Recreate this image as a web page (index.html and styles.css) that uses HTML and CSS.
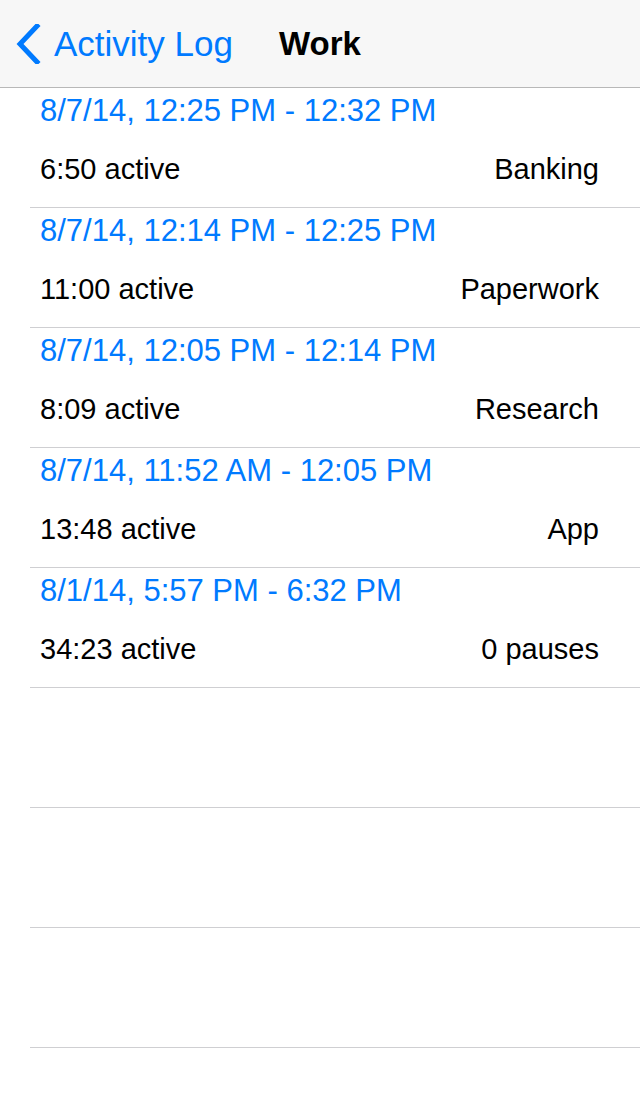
FILE: index.html
```html
<!DOCTYPE html>
<html>
<head>
<meta charset="utf-8">
<link rel="stylesheet" href="styles.css">
</head>
<body>
<div class="screen">
  <header class="navbar">
    <div class="back">
      <svg class="chevron" width="26" height="40" viewBox="0 0 26 40">
        <polyline points="22,2 5,20 22,38" fill="none" stroke="#007aff" stroke-width="5" stroke-linecap="square" stroke-linejoin="miter"/>
      </svg>
      <span class="back-label">Activity Log</span>
    </div>
    <div class="title">Work</div>
  </header>
  <ul class="list">
    <li class="row">
      <div class="date">8/7/14, 12:25 PM - 12:32 PM</div>
      <div class="detail"><span>6:50 active</span><span>Banking</span></div>
    </li>
    <li class="row">
      <div class="date">8/7/14, 12:14 PM - 12:25 PM</div>
      <div class="detail"><span>11:00 active</span><span>Paperwork</span></div>
    </li>
    <li class="row">
      <div class="date">8/7/14, 12:05 PM - 12:14 PM</div>
      <div class="detail"><span>8:09 active</span><span>Research</span></div>
    </li>
    <li class="row">
      <div class="date">8/7/14, 11:52 AM - 12:05 PM</div>
      <div class="detail"><span>13:48 active</span><span>App</span></div>
    </li>
    <li class="row">
      <div class="date">8/1/14, 5:57 PM - 6:32 PM</div>
      <div class="detail"><span>34:23 active</span><span>0 pauses</span></div>
    </li>
    <li class="row empty"></li>
    <li class="row empty"></li>
    <li class="row empty"></li>
  </ul>
</div>
</body>
</html>
```
FILE: styles.css
```css
* { box-sizing: border-box; }
html, body {
  margin: 0;
  padding: 0;
  background: #ffffff;
}
body {
  font-family: "Liberation Sans", Arial, sans-serif;
  width: 640px;
  height: 1096px;
  overflow: hidden;
}
.screen {
  width: 640px;
}
.navbar {
  position: relative;
  height: 88px;
  background: #f7f7f7;
  border-bottom: 1px solid #b8b8b8;
  display: flex;
  align-items: center;
}
.back {
  display: flex;
  align-items: center;
  padding-left: 15px;
  margin-top: 1px;
}
.chevron {
  display: block;
  margin-right: 13px;
}
.back-label {
  color: #007aff;
  font-size: 35px;
  line-height: 40px;
}
.title {
  position: absolute;
  left: 0;
  right: 0;
  top: 24px;
  text-align: center;
  font-size: 33px;
  font-weight: bold;
  line-height: 40px;
  color: #000;
  pointer-events: none;
}
.list {
  list-style: none;
  margin: 0;
  padding: 0;
}
.row {
  margin-left: 30px;
  height: 120px;
  border-bottom: 1px solid #cfcfd2;
  padding: 3px 41px 0 10px;
}
.date {
  color: #007aff;
  font-size: 31px;
  line-height: 40px;
  white-space: nowrap;
}
.detail {
  margin-top: 18px;
  display: flex;
  justify-content: space-between;
  font-size: 29px;
  line-height: 40px;
  color: #000;
  white-space: nowrap;
}
```
